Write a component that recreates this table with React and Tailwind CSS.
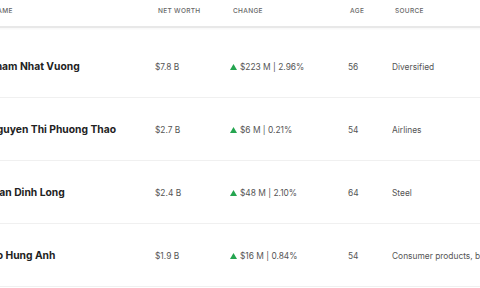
import React from "react";

const rows = [
  { name: "Pham Nhat Vuong", worth: "$7.8 B", change: "$223 M | 2.96%", age: "56", source: "Diversified" },
  { name: "Nguyen Thi Phuong Thao", worth: "$2.7 B", change: "$6 M | 0.21%", age: "54", source: "Airlines" },
  { name: "Tran Dinh Long", worth: "$2.4 B", change: "$48 M | 2.10%", age: "64", source: "Steel" },
  { name: "Ho Hung Anh", worth: "$1.9 B", change: "$16 M | 0.84%", age: "54", source: "Consumer products, banking" },
];

function Tri() {
  return (
    <svg width="7" height="6" viewBox="0 0 7 6" className="shrink-0">
      <polygon points="3.5,0 7,6 0,6" fill="#25a550" />
    </svg>
  );
}

export default function App() {
  return (
    <div className="w-[480px] h-[288px] overflow-hidden bg-white" style={{ fontFamily: "Inter, 'Liberation Sans', sans-serif" }}>
      <div className="ml-[-11px] w-[560px]">
        <div className="grid grid-cols-[166px_75px_118px_44px_1fr] h-[28px] pb-[2px] items-center border-b-2 border-[#e8e8e8] shadow-[0_1px_2px_rgba(0,0,0,0.04)] text-[6.5px] tracking-[0.05em] text-[#666] uppercase font-medium">
          <div className="pl-[3px]">Name</div>
          <div className="pl-[3px]">Net Worth</div>
          <div className="pl-[3px]">Change</div>
          <div className="pl-[2px]">Age</div>
          <div className="pl-[3px]">Source</div>
        </div>
        {rows.map((r, i) => (
          <div
            key={r.name}
            className={`grid grid-cols-[166px_75px_118px_44px_1fr] items-center border-b border-[#f0f0f0] ${i === 0 ? "h-[70px] pt-[9px]" : "h-[63px] pt-[2px]"}`}
          >
            <div className="text-[10.3px] font-bold text-[#222] whitespace-nowrap">{r.name}</div>
            <div className="text-[8.4px] text-[#555]">{r.worth}</div>
            <div className="flex items-center gap-[3px] text-[8.4px] text-[#555]">
              <Tri />
              <span>{r.change}</span>
            </div>
            <div className="text-[8.4px] text-[#555]">{r.age}</div>
            <div className="text-[8.4px] text-[#555] whitespace-nowrap">{r.source}</div>
          </div>
        ))}
      </div>
    </div>
  );
}
